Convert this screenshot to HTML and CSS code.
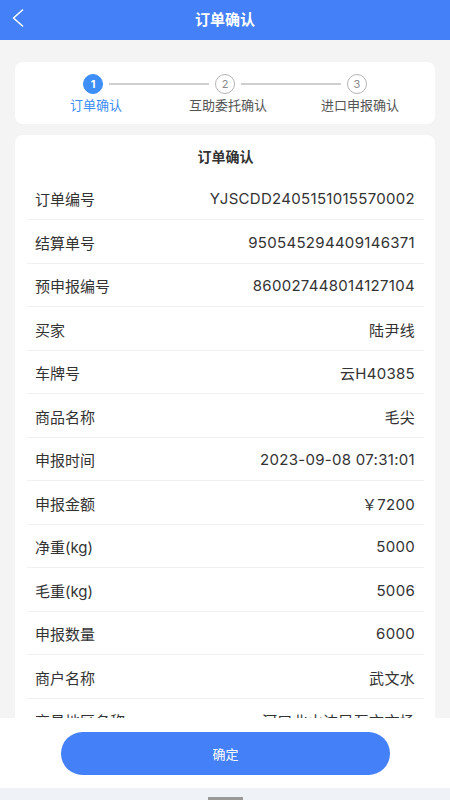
FILE: index.html
```html
<!DOCTYPE html>
<html lang="zh-CN">
<head>
<meta charset="utf-8">
<meta name="viewport" content="width=450">
<title>订单确认</title>
<link rel="stylesheet" href="styles.css">
</head>
<body>
<div class="app">
  <header class="topbar">
    <span class="back">
      <svg width="12" height="18" viewBox="0 0 12 18"><path d="M10.5 1 L1.5 9 L10.5 17" fill="none" stroke="#fff" stroke-width="1.6" stroke-linecap="round" stroke-linejoin="round"/></svg>
    </span>
    <h1 class="topbar-title">订单确认</h1>
  </header>

  <main class="content">
    <section class="card steps">
      <div class="steps-track">
        <span class="dot dot-active">1</span>
        <span class="track-line"></span>
        <span class="dot">2</span>
        <span class="track-line"></span>
        <span class="dot">3</span>
      </div>
      <div class="steps-labels">
        <span class="step-label step-label-active">订单确认</span>
        <span class="step-label">互助委托确认</span>
        <span class="step-label">进口申报确认</span>
      </div>
    </section>

    <section class="card detail">
      <h2 class="detail-title">订单确认</h2>
      <div class="rows">
        <div class="row"><span class="label">订单编号</span><span class="value">YJSCDD2405151015570002</span></div>
        <div class="row"><span class="label">结算单号</span><span class="value">950545294409146371</span></div>
        <div class="row"><span class="label">预申报编号</span><span class="value">860027448014127104</span></div>
        <div class="row"><span class="label">买家</span><span class="value">陆尹线</span></div>
        <div class="row"><span class="label">车牌号</span><span class="value">云H40385</span></div>
        <div class="row"><span class="label">商品名称</span><span class="value">毛尖</span></div>
        <div class="row"><span class="label">申报时间</span><span class="value">2023-09-08 07:31:01</span></div>
        <div class="row"><span class="label">申报金额</span><span class="value">￥7200</span></div>
        <div class="row"><span class="label">净重(kg)</span><span class="value">5000</span></div>
        <div class="row"><span class="label">毛重(kg)</span><span class="value">5006</span></div>
        <div class="row"><span class="label">申报数量</span><span class="value">6000</span></div>
        <div class="row"><span class="label">商户名称</span><span class="value">武文水</span></div>
        <div class="row"><span class="label">交易地区名称</span><span class="value">河口北山边民互市市场</span></div>
        <div class="row"><span class="label">交易日期</span><span class="value">2023-09-08</span></div>
      </div>
    </section>
  </main>

  <footer class="footer">
    <div class="footer-bar">
      <button class="confirm" type="button">确定</button>
    </div>
    <div class="home-strip"><span class="home-indicator"></span></div>
  </footer>
</div>
</body>
</html>
```

FILE: styles.css
```css
* { box-sizing: border-box; }
html, body { margin: 0; padding: 0; }
body {
  font-family: Inter, "Noto Sans CJK SC", sans-serif;
  color: #333;
  background: #f4f4f4;
}
.app {
  height: 800px;
  display: flex;
  flex-direction: column;
  overflow: hidden;
}
.topbar {
  height: 40px;
  flex: none;
  background: #4480f7;
  display: flex;
  align-items: center;
  justify-content: center;
  position: relative;
}
.back {
  position: absolute;
  left: 12px;
  top: 9px;
  width: 12px;
  height: 18px;
  display: flex;
}
.topbar-title {
  margin: 0;
  font-size: 15px;
  font-weight: 700;
  color: #fff;
  line-height: 20px;
}
.content {
  flex: 1;
  overflow: hidden;
  padding: 22px 15px 0;
  display: flex;
  flex-direction: column;
  gap: 11px;
}
.card {
  background: #fff;
  border-radius: 8px;
  flex: none;
}
.steps {
  height: 62px;
  padding: 12px 12px 0;
}
.steps-track {
  width: 284px;
  margin: 0 auto;
  display: flex;
  align-items: center;
  height: 20px;
}
.dot {
  width: 20px;
  height: 20px;
  border-radius: 50%;
  border: 1px solid #b5b5b5;
  color: #8a8a8a;
  font-size: 11px;
  display: flex;
  align-items: center;
  justify-content: center;
  flex: none;
  line-height: 1;
}
.dot-active {
  background: #3d8ef6;
  border-color: #3d8ef6;
  color: #fff;
  font-weight: 700;
}
.track-line {
  flex: 1;
  height: 2px;
  background: #cfcfcf;
  margin: 0 6px;
}
.steps-labels {
  display: grid;
  grid-template-columns: repeat(3, 132px);
  margin-top: 2px;
}
.step-label {
  text-align: center;
  font-size: 13px;
  line-height: 18px;
  color: #555;
  padding-left: 6px;
}
.step-label-active { color: #3d8ef6; }

.detail {
  padding: 0 11px 0 12px;
}
.detail-title {
  margin: 0;
  height: 41.5px;
  font-size: 14px;
  font-weight: 700;
  line-height: 20px;
  text-align: center;
  padding-top: 12px;
  color: #333;
}
.row {
  height: 43.5px;
  border-bottom: 1.5px solid #f0f0f0;
  display: flex;
  align-items: center;
  justify-content: space-between;
  padding: 2px 9px 0 8px;
  font-size: 15px;
}
.label { color: #333; }
.value { color: #333; letter-spacing: 0.3px; }

.footer { flex: none; }
.footer-bar {
  height: 70px;
  background: #fff;
  padding: 14px 60px 0 61px;
}
.confirm {
  width: 100%;
  height: 43px;
  border: none;
  border-radius: 22px;
  background: #4480f7;
  color: #fff;
  font-family: Inter, "Noto Sans CJK SC", sans-serif;
  font-size: 13px;
  padding: 0;
}
.home-strip {
  height: 12px;
  background: #eff2f7;
  display: flex;
  justify-content: center;
  align-items: flex-end;
}
.home-indicator {
  width: 35px;
  height: 3px;
  background: #999;
}
```
